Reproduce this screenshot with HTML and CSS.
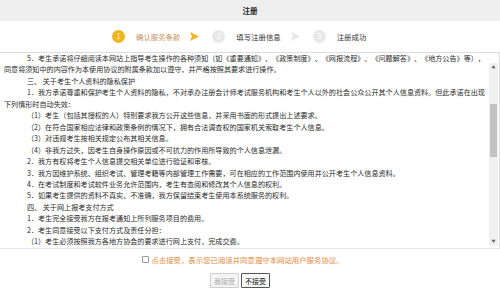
FILE: index.html
```html
<!DOCTYPE html>
<html lang="zh-CN">
<head>
    <meta charset="UTF-8">
    <title>注册</title>
    <link rel="stylesheet" href="styles.css">
</head>
<body>
    <div class="title-bar">注册</div>

    <div class="steps">
        <span class="step-num active">1</span>
        <span class="step-text active">确认服务条款</span>
        <svg class="step-arrow" width="9" height="9" viewBox="0 0 9 9"><polygon points="0,0 9,4.5 0,9 2,4.5" fill="#f5b31a"/></svg>
        <span class="step-num">2</span>
        <span class="step-text">填写注册信息</span>
        <svg class="step-arrow" width="9" height="9" viewBox="0 0 9 9"><polygon points="0,0 9,4.5 0,9 2,4.5" fill="#e6e6e6"/></svg>
        <span class="step-num">3</span>
        <span class="step-text">注册成功</span>
    </div>

    <div class="terms-box">
        <div class="terms">
            <p>5．考生承诺将仔细阅读本网站上指导考生操作的各种须知（如《重要通知》、《政策制度》、《网报流程》、《问题解答》、《地方公告》等），同意将须知中的内容作为本使用协议的附属条款加以遵守，并严格按照其要求进行操作。</p>
            <p>三、 关于考生个人资料的隐私保护</p>
            <p>1．我方承诺尊重和保护考生个人资料的隐私，不对承办注册会计师考试服务机构和考生个人以外的社会公众公开其个人信息资料。但此承诺在出现下列情形时自动失效：</p>
            <p>（1）考生（包括其授权的人）特别要求我方公开这些信息，并采用书面的形式提出上述要求。</p>
            <p>（2）在符合国家相应法律和政策条例的情况下，拥有合法调查权的国家机关索取考生个人信息。</p>
            <p>（3）对违规考生按相关规定公布其相关信息。</p>
            <p>（4）非我方过失，因考生自身操作原因或不可抗力的作用所导致的个人信息泄漏。</p>
            <p>2．我方有权将考生个人信息提交相关单位进行验证和审核。</p>
            <p>3．我方因维护系统、组织考试、管理考籍等内部管理工作需要，可在相应的工作范围内使用并公开考生个人信息资料。</p>
            <p>4．在考试制度和考试软件业务允许范围内，考生有查阅和修改其个人信息的权利。</p>
            <p>5．如果考生提供的资料不真实、不准确，我方保留结束考生使用本系统服务的权利。</p>
            <p>四、 关于网上报考支付方式</p>
            <p>1．考生完全接受我方在报考通知上所列服务项目的费用。</p>
            <p>2．考生同意接受以下支付方式及责任分担：</p>
            <p>（1）考生必须按照我方各地方协会的要求进行网上支付，完成交费。</p>
        </div>
        <div class="scrollbar">
            <div class="scroll-btn">&#9650;</div>
            <div class="scroll-track">
                <div class="scroll-thumb"></div>
            </div>
            <div class="scroll-btn">&#9660;</div>
        </div>
    </div>

    <label class="agree">
        <span class="agree-box"></span>
        点击接受，表示您已阅读并同意遵守本网站用户服务协议。
    </label>

    <div class="actions">
        <button class="btn" disabled>我接受</button>
        <button class="btn">不接受</button>
    </div>
</body>
</html>
```

FILE: styles.css
```css
body {
    margin: 0;
    width: 500px;
    font-family: "Noto Sans CJK SC", "Noto Sans", sans-serif;
    color: #333;
    background-color: #fff;
    text-spacing-trim: space-all;
}
.title-bar {
    height: 21px;
    line-height: 21px;
    background-color: #efefef;
    text-align: center;
    font-size: 7.5px;
    font-weight: bold;
    color: #222;
}
.steps {
    height: 31px;
    display: flex;
    align-items: center;
    padding-left: 112px;
    font-size: 7.4px;
}
.step-num {
    width: 13px;
    height: 13px;
    border-radius: 50%;
    background-color: #e8e8e8;
    color: #fff;
    font-size: 7px;
    line-height: 13px;
    text-align: center;
    margin-right: 11px;
}
.step-num.active {
    background-color: #f5b31a;
}
.step-text {
    color: #333;
}
.step-text.active {
    color: #c98f5c;
}
.step-arrow {
    margin: 0 13px 0 10px;
}
.terms-box {
    height: 195px;
    display: flex;
    border-top: 1px solid #dcdcdc;
    border-right: 1px solid #dcdcdc;
    border-bottom: 1px solid #e6e6e6;
}
.terms {
    flex: 1;
    overflow: hidden;
    padding: 0 1px 0 4px;
    font-size: 7.1px;
    line-height: 11.45px;
    color: #2a2a2a;
}
.terms p {
    margin: 0;
    text-indent: 23px;
}
.scrollbar {
    width: 9px;
    margin: 10px 1px 2px 0;
    display: flex;
    flex-direction: column;
    background-color: #f0f0f0;
}
.scroll-btn {
    height: 9px;
    font-size: 4px;
    line-height: 9px;
    text-align: center;
    color: #606060;
}
.scroll-track {
    flex: 1;
}
.scroll-thumb {
    margin: 32px 1px 0 1px;
    height: 53px;
    background-color: #c2c2c2;
}
.agree {
    display: flex;
    align-items: center;
    justify-content: center;
    padding-right: 14px;
    margin-top: 3px;
    height: 14px;
    font-size: 7.4px;
    color: #df8a3c;
}
.agree-box {
    width: 5px;
    height: 5px;
    border: 1px solid #999;
    border-radius: 1px;
    margin-right: 2px;
    background-color: #fff;
}
.actions {
    display: flex;
    justify-content: center;
    gap: 2px;
    margin-top: 7px;
    padding-right: 20px;
}
.btn {
    height: 15px;
    padding: 0 3px;
    font-family: "Noto Sans CJK SC", sans-serif;
    font-size: 7px;
    border: 1px solid #555;
    border-radius: 1px;
    background-color: #fafafa;
    color: #111;
}
.btn:disabled {
    border-color: #cfcfcf;
    background-color: #f4f4f4;
    color: #aaa;
}
```
